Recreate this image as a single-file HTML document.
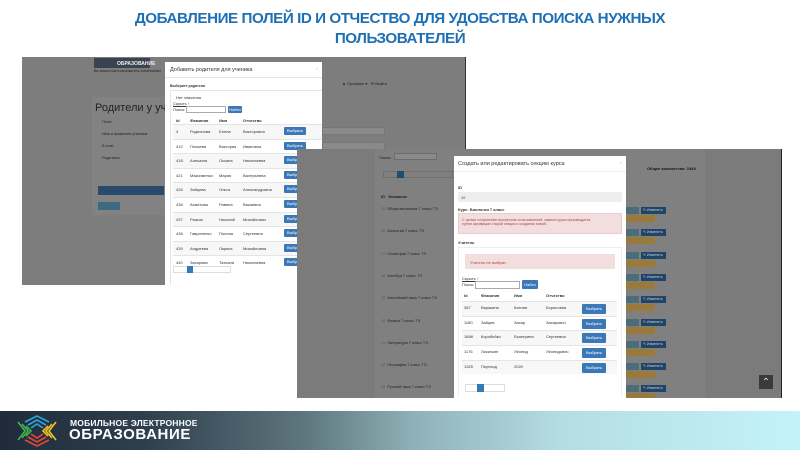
<!DOCTYPE html>
<html><head><meta charset="utf-8"><style>
*{margin:0;padding:0;box-sizing:border-box}
body{width:800px;height:450px;background:#fff;position:relative;overflow:hidden;font-family:"Liberation Sans","DejaVu Sans",sans-serif}
.a{position:absolute}
.t{font-size:4px;color:#333;white-space:nowrap}
.btn{position:absolute;background:#3b78b8;color:#fff;font-size:4px;border-radius:1px;text-align:center}
.row{position:absolute;left:0;right:0;border-top:1px solid #e4e4e4}
</style></head><body>

<div class="a" style="left:0;top:9px;width:800px;text-align:center;color:#1e6fb3;font-weight:bold;font-size:15.2px;line-height:20px;letter-spacing:-0.45px">ДОБАВЛЕНИЕ ПОЛЕЙ ID И ОТЧЕСТВО ДЛЯ УДОБСТВА ПОИСКА НУЖНЫХ<br>ПОЛЬЗОВАТЕЛЕЙ</div>

<!-- Screenshot 1 -->
<div class="a" style="left:22px;top:57px;width:444px;height:228px;background:#7d7d7d;border-right:1px solid #333;overflow:hidden">
  <div class="a" style="left:72px;top:1px;width:56px;height:10px;background:#3a4450"></div>
  <div class="a t" style="left:95px;top:4px;color:#eee;font-size:5px;font-weight:bold">ОБРАЗОВАНИЕ</div>
  <div class="a t" style="left:72px;top:12px;color:#222;font-size:3.5px">Вы вошли как пользователь Administrator</div>
  <div class="a t" style="left:320px;top:24px;color:#222">▲ Профиль ▾ &nbsp; ⟳ Выйти</div>
  <div class="a" style="left:70px;top:40px;width:200px;height:118px;background:#828282"></div>
  <div class="a" style="left:73px;top:45px;font-size:11px;color:#222;white-space:nowrap">Родители у учени</div>
  <div class="a t" style="left:80px;top:62px;color:#222">Поле</div>
  <div class="a t" style="left:80px;top:74px;color:#222">Имя и фамилия ученика</div>
  <div class="a t" style="left:80px;top:86px;color:#222">E-mail</div>
  <div class="a t" style="left:80px;top:98px;color:#222">Родители</div>
  <div class="a" style="left:76px;top:129px;width:66px;height:9px;background:#2a4a6c"></div>
  <div class="a" style="left:76px;top:145px;width:22px;height:8px;background:#3d6a80"></div>
  <div class="a" style="left:300px;top:70px;width:63px;height:8px;background:#8a8a8a;border:1px solid #777"></div>
  <div class="a" style="left:300px;top:85px;width:63px;height:8px;background:#8a8a8a;border:1px solid #777"></div>
</div>
<!-- modal 1 -->
<div class="a" style="left:165px;top:62px;width:157px;height:223px;background:#fff;overflow:hidden">
  <div class="a t" style="left:5px;top:5px;font-size:5.5px">Добавить родителя для ученика</div>
  <div class="a t" style="right:4px;top:4px;color:#bbb">×</div>
  <div class="a" style="left:0;right:0;top:15px;border-top:1px solid #e5e5e5"></div>
  <div class="a t" style="left:5px;top:22px;font-weight:bold;font-size:3.5px">Выберите родителя</div>
  <div class="a" style="left:5px;top:28px;width:160px;height:200px;border:1px solid #e5e5e5"></div>
  <div class="a t" style="left:11px;top:33px">Нет значения</div>
  <div class="a t" style="left:8px;top:39px;text-decoration:underline">Скрыть ↑</div>
  <div class="a t" style="left:8px;top:45px">Поиск:</div>
  <div class="a" style="left:21px;top:44px;width:40px;height:7px;border:1px solid #aaa"></div>
  <div class="btn" style="left:63px;top:44px;width:14px;height:7px;line-height:7px">Найти</div>
  <div class="a" style="left:8px;top:54px;width:150px;height:170px">
    <div class="a t" style="left:3px;top:2px;font-weight:bold">Id</div>
    <div class="a t" style="left:17px;top:2px;font-weight:bold">Фамилия</div>
    <div class="a t" style="left:46px;top:2px;font-weight:bold">Имя</div>
    <div class="a t" style="left:70px;top:2px;font-weight:bold">Отчество</div>
  </div>
  <div id="m1" class="a" style="left:8px;top:62px;width:150px;height:150px"></div>
  <div class="a" style="left:8px;top:204px;width:58px;height:7px;border:1px solid #ddd"></div>
  <div class="a" style="left:22px;top:204px;width:6px;height:7px;background:#337ab7"></div>
</div>

<!-- Screenshot 2 -->
<div class="a" style="left:297px;top:149px;width:485px;height:249px;background:#7b7b7b;border-right:1px solid #222;overflow:hidden">
  <div class="a" style="left:78px;top:0;width:330px;height:249px;background:#808080"></div>
  <div class="a t" style="left:82px;top:6px;color:#222">Поиск:</div>
  <div class="a" style="left:97px;top:4px;width:43px;height:7px;background:#8a8a8a;border:1px solid #6d6d6d"></div>
  <div class="a" style="left:86px;top:22px;width:70px;height:7px;border:1px solid #707070"></div>
  <div class="a" style="left:100px;top:22px;width:7px;height:7px;background:#1f4d70"></div>
  <div class="a t" style="left:84px;top:45px;color:#222;font-weight:bold">ID &nbsp; Название</div>
  <div class="a t" style="left:350px;top:17px;color:#111;font-weight:bold">Общее количество: 1943</div>
  <div id="m2l" class="a" style="left:84px;top:58px;width:80px;height:190px"></div>
  <div id="m2r" class="a" style="left:328px;top:58px;width:60px;height:190px"></div>
  <div class="a" style="left:462px;top:226px;width:14px;height:14px;background:#3a3a3a;color:#ddd;font-size:10px;text-align:center;line-height:15px">⌃</div>
</div>
<!-- modal 2 -->
<div class="a" style="left:454px;top:156px;width:172px;height:242px;background:#fff;overflow:hidden">
  <div class="a t" style="left:4px;top:5px;font-size:5.5px">Создать или редактировать секцию курса</div>
  <div class="a t" style="right:4px;top:4px;color:#bbb">×</div>
  <div class="a" style="left:0;right:0;top:15px;border-top:1px solid #eee"></div>
  <div class="a t" style="left:4px;top:29px;font-weight:bold">ID</div>
  <div class="a" style="left:4px;top:36px;width:164px;height:10px;background:#eee;border-radius:1px"></div>
  <div class="a t" style="left:7px;top:39px;color:#555">26</div>
  <div class="a t" style="left:4px;top:51px;font-weight:bold">Курс: Биология 7 класс</div>
  <div class="a" style="left:4px;top:57px;width:164px;height:21px;background:#f2dede;border:1px solid #ebccd1"></div>
  <div class="a t" style="left:8px;top:62px;color:#a94442;font-size:3.6px">С целью сохранения прогрессов пользователей, замена курса производится<br>путем архивации старой секции и создания новой.</div>
  <div class="a t" style="left:4px;top:84px;font-weight:bold">Учитель</div>
  <div class="a" style="left:4px;top:91px;width:164px;height:160px;border:1px solid #eee"></div>
  <div class="a" style="left:11px;top:98px;width:150px;height:15px;background:#f2dede"></div>
  <div class="a t" style="left:16px;top:104px;color:#a94442">Учитель не выбран</div>
  <div class="a t" style="left:8px;top:120px;text-decoration:underline">Скрыть ↑</div>
  <div class="a t" style="left:8px;top:126px">Поиск:</div>
  <div class="a" style="left:21px;top:125px;width:45px;height:8px;border:1px solid #aaa"></div>
  <div class="btn" style="left:68px;top:124px;width:16px;height:9px;line-height:9px">Найти</div>
  <div class="a t" style="left:10px;top:137px;font-weight:bold">Id</div>
  <div class="a t" style="left:27px;top:137px;font-weight:bold">Фамилия</div>
  <div class="a t" style="left:60px;top:137px;font-weight:bold">Имя</div>
  <div class="a t" style="left:92px;top:137px;font-weight:bold">Отчество</div>
  <div id="m2" class="a" style="left:8px;top:145px;width:155px;height:75px"></div>
  <div class="a" style="left:11px;top:228px;width:40px;height:8px;border:1px solid #ddd"></div>
  <div class="a" style="left:23px;top:228px;width:7px;height:8px;background:#337ab7"></div>
</div>

<!-- Footer -->
<div class="a" style="left:0;top:411px;width:800px;height:39px;background:linear-gradient(90deg,#1f2b3b 0%,#2e3f4d 18%,#5e767d 38%,#8fb2b8 52%,#b4dde3 70%,#c3f3f9 100%)"></div>
<svg class="a" style="left:15px;top:413px" width="45" height="36" viewBox="0 0 45 36">
  <g fill="none" stroke-width="1.6">
    <path d="M10 9 L22 3 L34 9" stroke="#2aa8e0"/><path d="M13 12 L22 7 L31 12" stroke="#2aa8e0"/><path d="M16 15 L22 11 L28 15" stroke="#2aa8e0"/>
    <path d="M3 9 L10 18 L3 27" stroke="#3fb34f"/><path d="M7 11 L13 18 L7 25" stroke="#3fb34f"/><path d="M11 13 L16 18 L11 23" stroke="#3fb34f"/>
    <path d="M41 9 L34 18 L41 27" stroke="#f3c21b"/><path d="M37 11 L31 18 L37 25" stroke="#f3c21b"/><path d="M33 13 L28 18 L33 23" stroke="#f3c21b"/>
    <path d="M10 27 L22 33 L34 27" stroke="#e8463a"/><path d="M13 24 L22 29 L31 24" stroke="#e8463a"/><path d="M16 21 L22 25 L28 21" stroke="#e8463a"/>
  </g>
</svg>
<div class="a" style="left:70px;top:418px;color:#fff;font-size:8.5px;font-weight:bold;letter-spacing:0.2px;white-space:nowrap">МОБИЛЬНОЕ ЭЛЕКТРОННОЕ</div>
<div class="a" style="left:69px;top:426px;color:#fff;font-size:15px;font-weight:bold;letter-spacing:0.6px;white-space:nowrap">ОБРАЗОВАНИЕ</div>

<script>
var r1=[["4","Родионова","Елена","Викторовна"],["412","Попаева","Виктория","Ивановна"],["418","Алешина","Оксана","Николаевна"],["421","Максименко","Мария","Валерьевна"],["426","Зайцева","Ольга","Александровна"],["436","Ахметова","Равина","Вакаевна"],["437","Рыжов","Николай","Михайлович"],["438","Гавриленко","Полина","Сергеевна"],["439","Андреева","Лариса","Михайловна"],["440","Захарова","Татьяна","Николаевна"]];
var h='';r1.forEach(function(r,i){var y=i*14.6;h+='<div class="row" style="top:'+y+'px;height:14.6px;background:'+(i%2?'#fff':'#f7f7f7')+'"></div><div class="a t" style="left:3px;top:'+(y+5)+'px">'+r[0]+'</div><div class="a t" style="left:17px;top:'+(y+5)+'px">'+r[1]+'</div><div class="a t" style="left:46px;top:'+(y+5)+'px">'+r[2]+'</div><div class="a t" style="left:70px;top:'+(y+5)+'px">'+r[3]+'</div><div class="btn" style="left:111px;top:'+(y+3)+'px;width:22px;height:8px;line-height:8px">Выбрать</div>';});
document.getElementById('m1').innerHTML=h;
var r2=[["387","Варакина","Ксения","Борисовна"],["1180","Зайцев","Захар","Захарович"],["1898","Коробейко","Екатерина","Сергеевна"],["1176","Лисичкин","Леонид","Леонидович"],["1325","Переход","2020",""]];
h='';r2.forEach(function(r,i){var y=i*14.7;h+='<div class="row" style="top:'+y+'px;height:14.7px;background:'+(i%2?'#fff':'#f7f7f7')+'"></div><div class="a t" style="left:2px;top:'+(y+4)+'px">'+r[0]+'</div><div class="a t" style="left:19px;top:'+(y+4)+'px">'+r[1]+'</div><div class="a t" style="left:52px;top:'+(y+4)+'px">'+r[2]+'</div><div class="a t" style="left:84px;top:'+(y+4)+'px">'+r[3]+'</div><div class="btn" style="left:120px;top:'+(y+3)+'px;width:24px;height:10px;line-height:10px">Выбрать</div>';});
document.getElementById('m2').innerHTML=h;
var n=["Обществознание 7 класс ТЭ","Биология 7 класс ТЭ","Геометрия 7 класс ТЭ","Алгебра 7 класс ТЭ","Английский язык 7 класс ТЭ","Физика 7 класс ТЭ","Литература 7 класс ТЭ","География 7 класс ТЭ","Русский язык 7 класс ТЭ"];
h='';var g='';n.forEach(function(s,i){var y=i*22.3;h+='<div class="a t" style="left:0;top:'+y+'px;color:#222;font-size:3.8px;white-space:normal;width:60px"><span style="color:#3b5f7f">'+(25+i)+'</span> &nbsp;'+s+'</div>';
g+='<div class="a" style="left:0;top:'+y+'px;width:14px;height:7px;background:#4b6d7a"></div><div class="a" style="left:16px;top:'+y+'px;width:25px;height:7px;background:#1f4568;color:#ccc;font-size:3.5px;line-height:7px;padding-left:2px">✎ Изменить</div><div class="a" style="left:0;top:'+(y+8)+'px;width:30px;height:7px;background:#9a7a3a"></div>';});
document.getElementById('m2l').innerHTML=h;document.getElementById('m2r').innerHTML=g;
</script>
</body></html>
